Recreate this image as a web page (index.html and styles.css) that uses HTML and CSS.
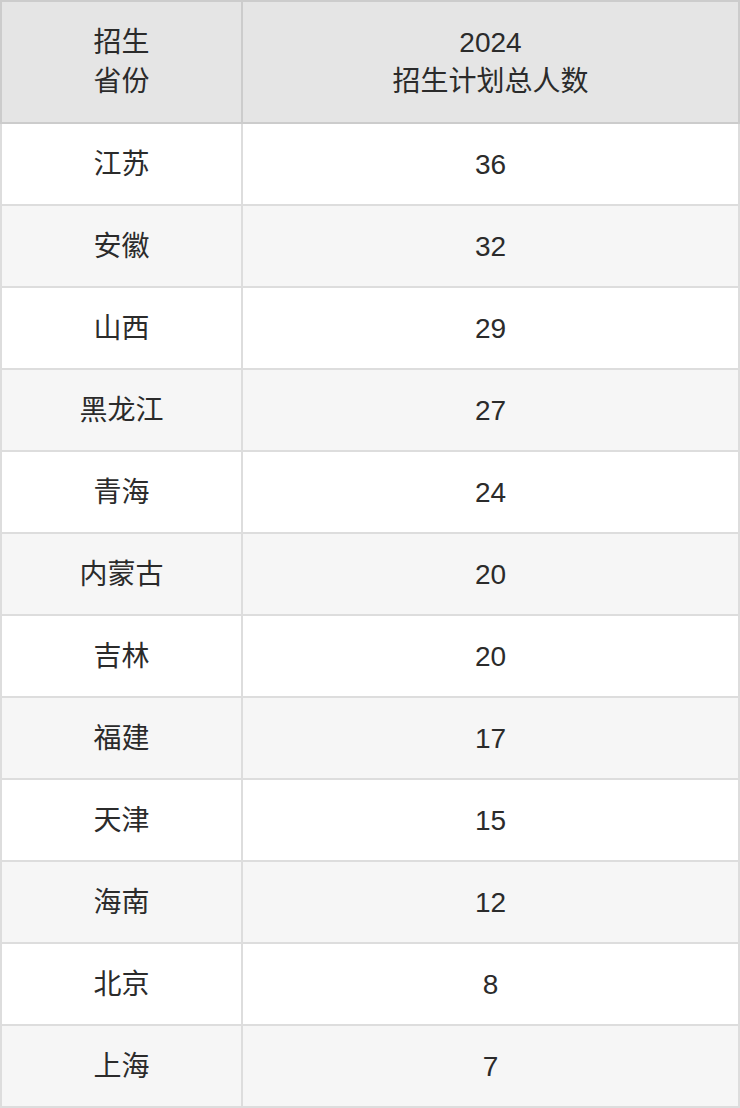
FILE: index.html
```html
<!DOCTYPE html>
<html lang="zh-CN">
<head>
<meta charset="utf-8">
<link rel="stylesheet" href="styles.css">
</head>
<body>
<table class="plan">
  <thead>
    <tr>
      <th class="col-prov">招生<br>省份</th>
      <th class="col-num">2024<br>招生计划总人数</th>
    </tr>
  </thead>
  <tbody>
    <tr><td>江苏</td><td>36</td></tr>
    <tr><td>安徽</td><td>32</td></tr>
    <tr><td>山西</td><td>29</td></tr>
    <tr><td>黑龙江</td><td>27</td></tr>
    <tr><td>青海</td><td>24</td></tr>
    <tr><td>内蒙古</td><td>20</td></tr>
    <tr><td>吉林</td><td>20</td></tr>
    <tr><td>福建</td><td>17</td></tr>
    <tr><td>天津</td><td>15</td></tr>
    <tr><td>海南</td><td>12</td></tr>
    <tr><td>北京</td><td>8</td></tr>
    <tr><td>上海</td><td>7</td></tr>
  </tbody>
</table>
</body>
</html>
```

FILE: styles.css
```css
html, body {
  margin: 0;
  padding: 0;
  background: #ffffff;
}

.plan {
  width: 740px;
  border-collapse: collapse;
  table-layout: fixed;
  font-family: "Liberation Sans", "Noto Sans CJK SC", sans-serif;
  font-size: 28px;
  line-height: 39px;
  color: #2b2b2b;
}

.plan th,
.plan td {
  padding: 0;
  text-align: center;
  vertical-align: middle;
  font-weight: normal;
}

.plan th {
  height: 120px;
  background: #e5e5e5;
  border: 2px solid #cccccc;
}

.plan td {
  height: 80px;
  border: 2px solid #dddddd;
}

.col-prov {
  width: 239px;
}

.plan tbody tr:nth-child(odd) td {
  background: #ffffff;
}

.plan tbody tr:nth-child(even) td {
  background: #f6f6f6;
}
```
